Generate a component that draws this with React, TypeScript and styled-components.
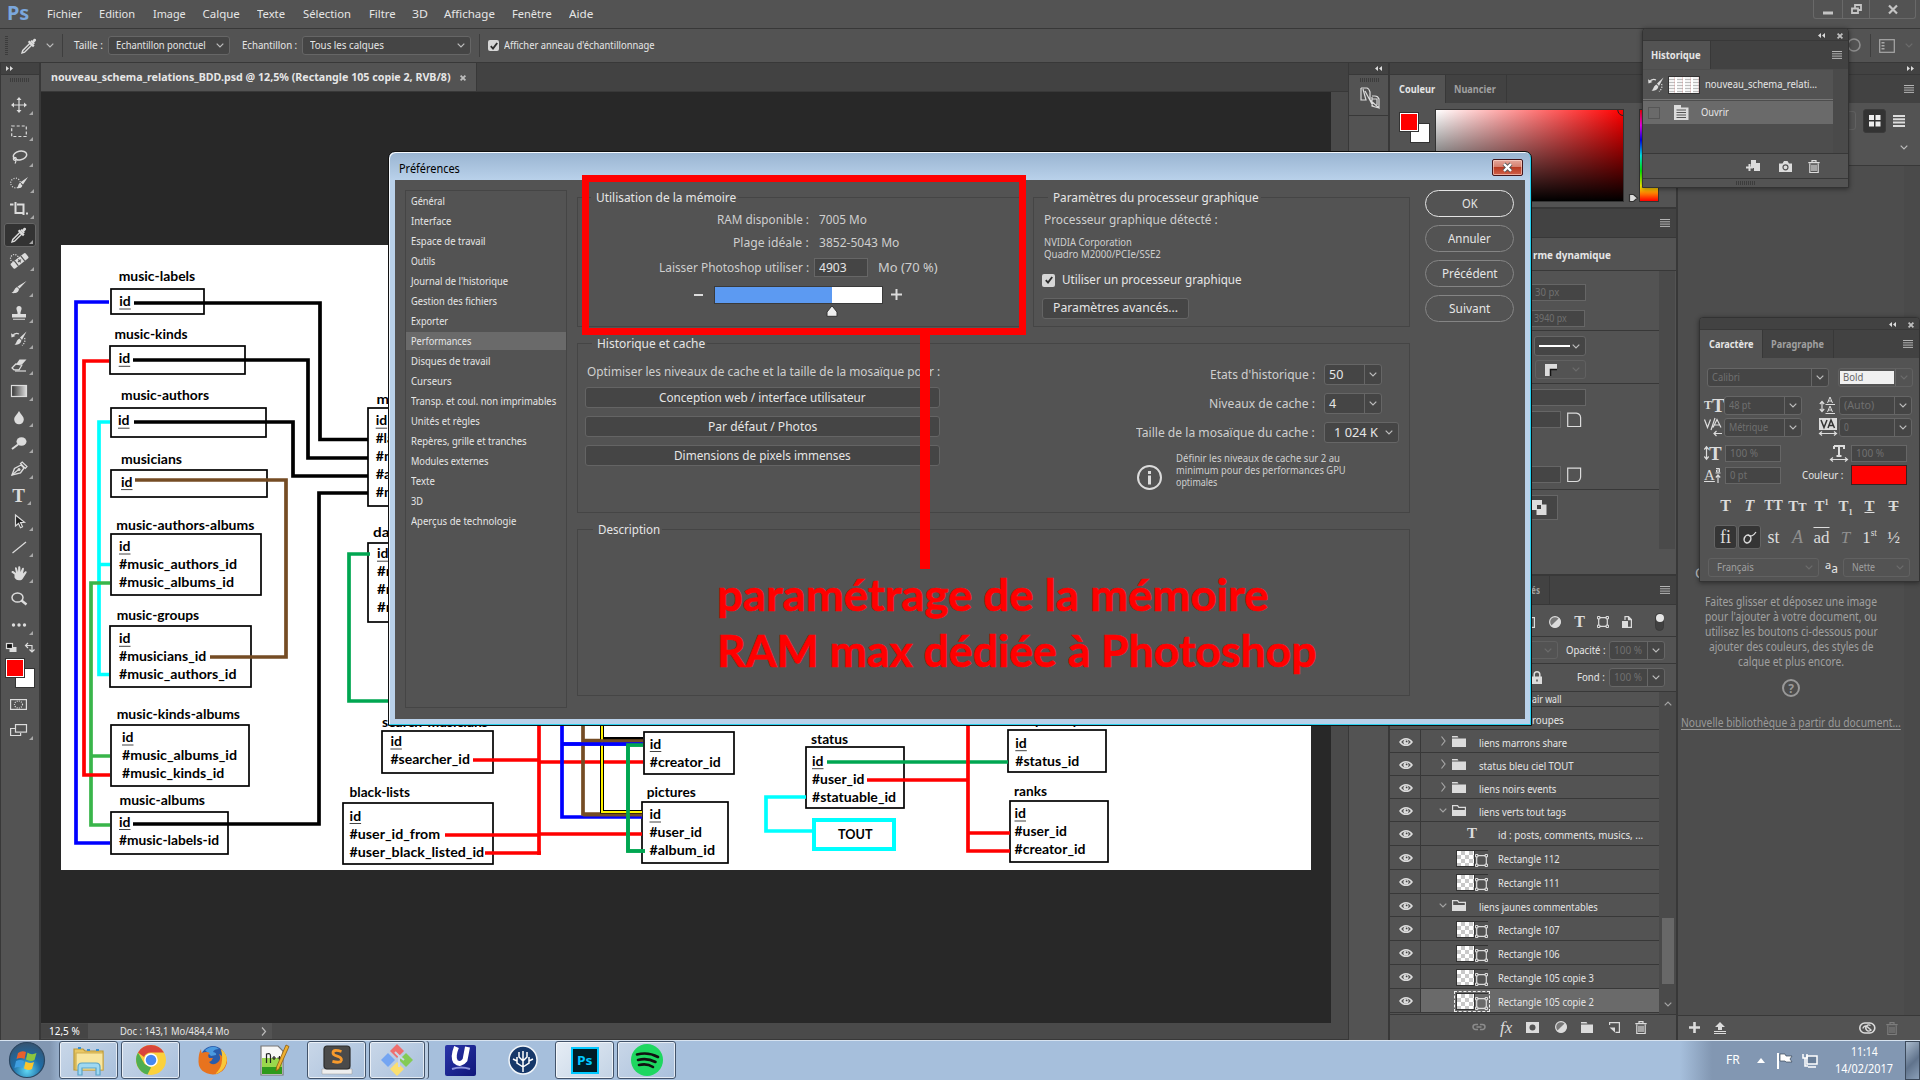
import React, { useLayoutEffect, useRef, useState } from "react";
import styled, { createGlobalStyle, css } from "styled-components";

const UI = `"Noto Sans", "Open Sans", "DejaVu Sans", sans-serif`;
const SCHEMA = `Lato, "Open Sans", sans-serif`;

const c = {
  panel: "#535353",
  strip: "#424242",
  line: "#383838",
  field: "#454545",
  edge: "#666666",
  text: "#e6e6e6",
  dim: "#a0a0a0",
  off: "#707070",
  icon: "#dcdcdc",
  canvas: "#282828",
};

const GlobalStyle = createGlobalStyle`
  html, body { margin: 0; padding: 0; overflow: hidden; background: ${c.panel}; }
  *, *::before, *::after { box-sizing: border-box; }
`;

/* ---------- text ---------- */

const TextBox = styled.span<{ $size: number; $color: string; $bold?: boolean; $font: string }>`
  display: inline-block;
  flex: none;
  font: ${(p) => (p.$bold ? 700 : 400)} ${(p) => p.$size}px/1.25 ${(p) => p.$font};
  color: ${(p) => p.$color};
  white-space: pre;
`;
const TextRun = styled.span<{ $underline?: boolean }>`
  display: inline-block;
  transform-origin: 0 50%;
  text-decoration: ${(p) => (p.$underline ? "underline" : "none")};
  text-underline-offset: 2px;
`;

type TProps = {
  children: string;
  w?: number;
  size?: number;
  color?: string;
  bold?: boolean;
  font?: string;
  underline?: boolean;
};

/* A single line of text condensed or widened to a fixed measure. */
function T({ children, w, size = 10, color = c.text, bold, font = UI, underline }: TProps) {
  const ref = useRef<HTMLSpanElement>(null);
  const [k, setK] = useState(1);
  useLayoutEffect(() => {
    if (w && ref.current) setK(w / ref.current.offsetWidth);
  }, [w, children]);
  return (
    <TextBox $size={size} $color={color} $bold={bold} $font={font} style={w ? { width: w } : undefined}>
      <TextRun ref={ref} $underline={underline} style={w ? { transform: `scaleX(${k})` } : undefined}>
        {children}
      </TextRun>
    </TextBox>
  );
}

/* ---------- icons ---------- */

const Glyph = styled.svg`
  display: block;
  flex: none;
  overflow: visible;
`;
const G = ({ w = 16, h = w, color = c.icon, children }: { w?: number; h?: number; color?: string; children: React.ReactNode }) => (
  <Glyph width={w} height={h} viewBox={`0 0 ${w} ${h}`} fill="none" stroke={color} strokeWidth={1.2} color={color}>
    {children}
  </Glyph>
);
const solid = { fill: "currentColor", stroke: "none" };

const Chevron = ({ color = "#bdbdbd" }: { color?: string }) => (
  <G w={8} h={5} color={color}><path d="M.7.7 4 4 7.3.7" /></G>
);
const ChevronUp = () => <G w={8} h={5} color="#a5a5a5"><path d="M.7 4.3 4 1l3.3 3.3" /></G>;
const Burger = () => (
  <G w={10} h={8} color="#b4b4b4"><path d="M0 .5h10M0 2.8h10M0 5.1h10M0 7.4h10" strokeWidth={1} /></G>
);
const Collapse = () => <G w={7} h={5}><path d="M3 0v5L0 2.5zM7 0v5L4 2.5z" {...solid} /></G>;
const Expand = () => <G w={7} h={5}><path d="M0 0v5l3-2.5zM4 0v5l3-2.5z" {...solid} /></G>;
const Cross = ({ color = "#bdbdbd" }: { color?: string }) => (
  <G w={6} h={6} color={color}><path d="M.6.6l4.8 4.8M5.4.6L.6 5.4" strokeWidth={1.8} /></G>
);
const Check = () => (
  <G w={8} h={8} color="#2f2f2f"><path d="M.8 4.2 3 6.6 7.2 1" strokeWidth={1.9} /></G>
);
const Dropper = () => (
  <G w={16}>
    <path d="M1 15l.8-2.600L9 5.200 10.800 7l-7.200 7.200z" strokeWidth={1.400} />
    <path d="M9.3 3.4 12.6 6.7l1.200-1.200-.7-.8 1.600-1.700c1.200-1.300-.5-3.200-1.900-1.900L11.200 2.800l-.8-.7z" {...solid} />
    <path d="M7.600 3.200l5.200 5.200" strokeWidth={2.200} />
  </G>
);
const HistoryBrush = () => (
  <G w={16}>
    <path d="M15.5.5 9 6.5 11 9z" {...solid} />
    <path d="M8.4 7.4l2 2.2c-.6 3.6-3.6 4.4-7 4.2C6 12 5 9 8.4 7.4z" {...solid} />
    <path d="M1 5.500C3 2.600 6 2 8 3" />
    <path d="M0 2.200l.6 4.400L4.400 5z" {...solid} />
    <path d="M13.600 7c1 3.600-.6 6-2.600 7.400" strokeDasharray="1.200 1.400" />
  </G>
);
const Trash = ({ color = c.icon }: { color?: string }) => (
  <G w={12} h={13} color={color}><path d="M1.8 3.5v9h8.4v-9M.3 2.600h11.400M4 2.300V.6h4v1.700M4 4.800V11M6 4.800V11M8 4.800V11" /></G>
);
const HalfDisc = () => (
  <G w={12}><circle cx={6} cy={6} r={5.4} fill="#777" /><path d="M1.9 10.1A5.8 5.8 0 0 0 10.1 1.9z" {...solid} /></G>
);
const Folder = ({ w = 14 }: { w?: number }) => (
  <G w={w} h={11}><path d={`M0 2.6h${w}V11H0zM0 0h5.5L6.5 1.5H0z`} {...solid} /></G>
);
const OpenFolder = () => (
  <G w={14} h={11}><path d="M.6 5V.6h5l1.2 1.8h6.600V5" /><path d="M0 5h14v6H0z" {...solid} /></G>
);
const ShapeIcon = ({ w = 12 }: { w?: number }) => (
  <G w={w}>
    <path d={`M2.6 1.7h${w - 5.2}M2.6 ${w - 1.7}h${w - 5.2}M1.7 2.6v${w - 5.2}M${w - 1.7} 2.6v${w - 5.2}`} />
    <path d={`M.5.5h2.4v2.4H.5zM${w - 2.9}.5h2.4v2.4h-2.4zM.5 ${w - 2.9}h2.4v2.4H.5zM${w - 2.9} ${w - 2.9}h2.4v2.4h-2.4z`} strokeWidth={1} />
  </G>
);
const Eye = () => (
  <G w={14} h={10}>
    <path d="M1 5C4 .6 10 .6 13 5 10 9.400 4 9.400 1 5z" strokeWidth={1.5} />
    <circle cx={7} cy={5} r={2.6} {...solid} /><circle cx={7.6} cy={4.400} r={0.9} fill="#444" stroke="none" />
  </G>
);
const Serif = styled.span<{ $size: number; $i?: boolean; $b?: boolean; $u?: boolean; $s?: boolean; $dim?: boolean; $fn?: string }>`
  font: ${(p) => (p.$i ? "italic " : "")}${(p) => (p.$b ? 700 : 400)} ${(p) => p.$size}px/1 "Liberation Serif", "DejaVu Serif", serif;
  color: ${(p) => (p.$dim ? "#8f8f8f" : c.icon)};
  text-decoration: ${(p) => (p.$u ? "underline" : p.$s ? "line-through" : p.$fn || "none")};
  white-space: nowrap;
  sub, sup { font-size: 55%; line-height: 0; }
`;

/* ---------- frame ---------- */

const Screen = styled.div`
  position: relative;
  width: 1920px;
  height: 1080px;
  overflow: hidden;
  display: flex;
  flex-direction: column;
  background: ${c.panel};
`;
const MenuBar = styled.header`
  height: 29px;
  flex: none;
  display: flex;
  align-items: flex-start;
  border-bottom: 1px solid ${c.line};
`;
const PsLogo = styled.div`
  width: 40px;
  padding: 2px 0 0 7px;
`;
const MenuItem = styled.div<{ $gap: number }>`
  margin-left: ${(p) => p.$gap}px;
  padding-top: 4px;
  height: 28px;
`;
const WindowButtons = styled.div`
  margin: 0 4px 0 auto;
  width: 103px;
  height: 19px;
  display: grid;
  grid-template-columns: 28px 27px 1fr;
  border: 1px solid #696969;
  border-top: 0;
  border-radius: 0 0 3px 3px;
`;
const WinButton = styled.div`
  display: flex;
  align-items: center;
  justify-content: center;
  & + & { border-left: 1px solid #696969; }
`;
const OptionsBar = styled.div`
  height: 34px;
  flex: none;
  display: flex;
  align-items: center;
  padding-left: 5px;
  border-bottom: 1px solid ${c.line};
`;
const GripV = styled.div`
  width: 3px;
  height: 20px;
  background: repeating-linear-gradient(#3c3c3c 0 1px, transparent 1px 2px);
`;
const GripH = styled.div<{ $w?: number }>`
  width: ${(p) => p.$w || 20}px;
  height: 4px;
  background: repeating-linear-gradient(90deg, #3c3c3c 0 1px, transparent 1px 2px);
`;
const Rule = styled.div`
  width: 1px;
  height: 23px;
  background: #3e3e3e;
`;
const Gap = styled.div<{ $w?: number; $h?: number }>`
  flex: none;
  width: ${(p) => p.$w || 0}px;
  height: ${(p) => p.$h || 0}px;
`;
const Push = styled.div`
  flex: 1;
`;

const Field = styled.div<{ $w: number; $h?: number; $round?: boolean; $ghost?: boolean }>`
  flex: none;
  width: ${(p) => p.$w}px;
  height: ${(p) => p.$h || 18}px;
  display: flex;
  align-items: center;
  justify-content: space-between;
  padding: 0 5px 0 4px;
  background: ${(p) => (p.$ghost ? "transparent" : c.field)};
  border: 1px solid ${(p) => (p.$ghost ? "#616161" : c.edge)};
  border-radius: ${(p) => (p.$round ? 3 : 0)}px;
`;
const Split = styled.div`
  align-self: stretch;
  width: 17px;
  margin-right: -5px;
  display: flex;
  align-items: center;
  justify-content: center;
  border-left: 1px solid ${c.edge};
`;
const CheckBox = styled.div<{ $s: number }>`
  width: ${(p) => p.$s}px;
  height: ${(p) => p.$s}px;
  flex: none;
  display: flex;
  align-items: center;
  justify-content: center;
  background: #d6d6d6;
  border-radius: 2px;
`;

const Work = styled.div`
  flex: none;
  height: 977px;
  display: flex;
  background: ${c.line};
`;

/* ---------- toolbox ---------- */

const Toolbox = styled.nav`
  width: 38px;
  margin: 0 2px 0 1px;
  flex: none;
  display: flex;
  flex-direction: column;
  align-items: center;
  background: ${c.panel};
`;
const StripHead = styled.div<{ $end?: boolean }>`
  align-self: stretch;
  height: 12px;
  flex: none;
  display: flex;
  align-items: center;
  justify-content: ${(p) => (p.$end ? "flex-end" : "flex-start")};
  padding: 0 6px 0 5px;
  background: ${c.strip};
  border-bottom: 1px solid ${c.line};
`;
const Tool = styled.div<{ $on?: boolean; $flag?: boolean }>`
  width: 32px;
  height: 26px;
  flex: none;
  display: flex;
  align-items: center;
  justify-content: center;
  padding-right: 3px;
  ${(p) =>
    p.$on &&
    css`
      background: #333;
      background-clip: padding-box;
      border-top: 3px solid transparent;
      border-bottom: 3px solid transparent;
      margin: -3px 0;
      height: 32px;
      border: 0;
      height: 24px;
      margin: 1px 0;
      border-radius: 3px;
      box-shadow: 0 0 0 1px #666 inset;
    `}
  &::after {
    content: "";
    align-self: flex-end;
    margin: 0 -6px 3px 2px;
    border: 2px solid transparent;
    border-right-color: ${(p) => (p.$flag === false ? "transparent" : "#a8a8a8")};
    border-bottom-color: ${(p) => (p.$flag === false ? "transparent" : "#a8a8a8")};
  }
`;
const Swatches = styled.div<{ $w: number; $h: number }>`
  display: grid;
  grid-template: ${(p) => p.$h}px / ${(p) => p.$w}px;
  flex: none;
`;
const Swatch = styled.div<{ $color: string; $back?: boolean }>`
  grid-area: 1 / 1;
  width: 20px;
  height: 20px;
  background: ${(p) => p.$color};
  border: 1px solid #333;
  ${(p) =>
    p.$back
      ? css`
          place-self: end;
        `
      : css`
          place-self: start;
          z-index: 1;
          box-shadow: inset 0 0 0 1px #fff;
        `}
`;

const toolIcons: { icon: React.ReactNode; on?: boolean; flag?: boolean }[] = [
  { icon: <G><path d="M8 1v14M1 8h14" /><path d="M8 0l2.500 3h-5zM8 16l2.500-3h-5zM0 8l3-2.500v5zM16 8l-3-2.500v5z" {...solid} /></G> },
  { icon: <G><path d="M.7 3h14.600v10.500H.7z" strokeDasharray="3 2" /></G> },
  { icon: <G><ellipse cx={9} cy={6.500} rx={6.800} ry={4.300} transform="rotate(-12 9 6.500)" strokeWidth={1.500} /><circle cx={3.800} cy={9.800} r={1.500} /><path d="M4.500 11c1 1.500 0 2.500-.5 3.500" /></G> },
  { icon: <G w={18} h={16}><circle cx={5.500} cy={8} r={4.800} strokeDasharray="1 1.500" /><path d="M18 2l-5 7.500-2.500-2.200zM9.800 8l2.600 2.600c-.6 2.600-3 3-5.600 2.600C8.400 12 7.800 9.500 9.800 8z" {...solid} /></G> },
  { icon: <G w={18} h={16}><path d="M5.500 1v11H14M0 3.500h3.500M7 3.500h6.500V14M16 12.500h2" strokeWidth={2} /></G> },
  { icon: <Dropper />, on: true },
  { icon: <G w={18} h={16}><circle cx={4.500} cy={5.500} r={4} strokeDasharray="1.200 1.200" /><g transform="rotate(-38 9 8)"><rect x={0} y={5} width={19} height={6.500} rx={1.500} {...solid} /><path d="M5.500 5v6.500M13.500 5v6.500M7.500 8.200h4M9.500 6.400v3.600" stroke="#535353" /></g></G> },
  { icon: <G><path d="M15.500 2 8.500 9.500 6.500 7.500zM6 8l2 2c-.4 4-4 4.500-7.500 4C3.500 12.500 3 9.500 6 8z" {...solid} /></G> },
  { icon: <G><path d="M5.500 4.200a2.600 2.600 0 1 1 5 0L9.500 7.500V9H15v3.500H1V9h5.500V7.500zM2 13.800h12v1H2z" {...solid} /></G> },
  { icon: <HistoryBrush /> },
  { icon: <G><path d="M7.500 3h7l-4.500 5h-6z" {...solid} transform="translate(1 -.5)" /><path d="M1 11 4.800 7l6 1.200L8 12.800H3z" /><path d="M4 14h11" /></G> },
  { icon: <G w={16} h={12}><defs><linearGradient id="tg"><stop stopColor="#333" /><stop offset="1" stopColor="#ddd" /></linearGradient></defs><rect x={0.500} y={0.500} width={15} height={11} fill="url(#tg)" /></G> },
  { icon: <G><path d="M8 2c2 3.600 4.800 5.400 4.800 8.500A4.800 4.800 0 0 1 3.200 10.500C3.200 7.400 6 5.600 8 2z" {...solid} /></G> },
  { icon: <G><ellipse cx={10.500} cy={6.500} rx={5} ry={4.300} {...solid} /><path d="M7 9.500 1 14" strokeWidth={2} /></G> },
  { icon: <G><path d="M1 14l2.500-6.500L10 4 13 7 9.500 12z" strokeWidth={1.400} /><path d="M1 14l6-5M9.500 2.500l4.800 4.800L16 5.500 11.200 1z" /><circle cx={8} cy={8.500} r={1.500} {...solid} /></G> },
  { icon: <Serif $size={19} $b>T</Serif> },
  { icon: <G><path d="M4.500 2v11l3-2.500 2 4.300 2-1-2-4.200 4-.3z" fill="#222" /></G> },
  { icon: <G><path d="M1.500 14 15 3" /></G> },
  { icon: <G><path d="M3.500 9.500.6 7.500C0 6.200 1.700 5.400 2.600 6.200L5 8 4 3.500C3.800 2.100 5.500 2 5.900 3.200L7 7 7.200 2.400C7.300 1 9.200 1 9.300 2.400L9.500 7 11 3.400c.5-1.200 2.200-.8 1.900.6L12 8.500l1.800-1.700c.9-1 2.300-.3 1.700.9L12.500 12.500c-1 2-2 2.800-4.500 2.800-2.400 0-3.700-1.300-4.500-2.800z" {...solid} /></G> },
  { icon: <G><ellipse cx={6.500} cy={6.500} rx={5.500} ry={4.600} strokeWidth={1.500} /><path d="M10.500 9.500 15.500 13.500" strokeWidth={2.400} /></G>, flag: false },
  { icon: <G><circle cx={2.500} cy={8} r={1.700} {...solid} /><circle cx={8} cy={8} r={1.700} {...solid} /><circle cx={13.500} cy={8} r={1.700} {...solid} /></G> },
];

/* ---------- document ---------- */

const DocColumn = styled.main`
  width: 1307px;
  flex: none;
  display: flex;
  flex-direction: column;
`;
const DocTabs = styled.div`
  height: 29px;
  display: flex;
  background: ${c.strip};
  border-bottom: 1px solid ${c.line};
`;
const DocTab = styled.div`
  width: 436px;
  display: flex;
  align-items: center;
  gap: 9px;
  padding: 1px 0 0 10px;
  background: ${c.panel};
  border-right: 1px solid ${c.line};
`;
const CanvasRow = styled.div`
  height: 931px;
  display: flex;
  background: #4a4a4a;
`;
const StatusBar = styled.footer`
  height: 16px;
  display: flex;
  background: #4a4a4a;
`;
const Zoom = styled.div`
  width: 47px;
  height: 14px;
  margin-top: 1px;
  padding-left: 8px;
  display: flex;
  align-items: center;
  background: #454545;
`;
const DocInfo = styled.div`
  width: 184px;
  display: flex;
  align-items: center;
  padding: 0 5px 0 32px;
  justify-content: space-between;
  background: ${c.panel};
`;

type Node = { t?: string; tx?: number; tw?: number; ty?: number; b: [number, number, number, number]; x: number; y: number; r: [string, number][] };
const nodes: Node[] = [
  { t: "music-labels", tx: 118.7, tw: 76.500, ty: 280.500, b: [111, 289, 93, 25], x: 119.3, y: 306, r: [["id", 11.500]] },
  { t: "music-kinds", tx: 114.5, tw: 73, ty: 339.200, b: [110, 346, 135, 28], x: 118.7, y: 363.300, r: [["id", 11.500]] },
  { t: "music-authors", tx: 121, tw: 88, ty: 400, b: [111, 408, 155, 29], x: 118, y: 425.200, r: [["id", 11.500]] },
  { t: "musicians", tx: 121, tw: 61, ty: 464.200, b: [111, 470, 156, 27], x: 121, y: 486.600, r: [["id", 11.500]] },
  { t: "music-authors-albums", tx: 116.3, tw: 138, ty: 530, b: [111, 534, 150, 61], x: 119, y: 551, r: [["id", 11.500], ["#music_authors_id", 118], ["#music_albums_id", 115]] },
  { t: "music-groups", tx: 116.7, tw: 82.500, ty: 620, b: [110, 626, 141, 61], x: 119, y: 643.300, r: [["id", 11.500], ["#musicians_id", 87.300], ["#music_authors_id", 117.500]] },
  { t: "music-kinds-albums", tx: 116.7, tw: 123.300, ty: 718.500, b: [111, 725, 138, 61], x: 122, y: 742, r: [["id", 11.500], ["#music_albums_id", 115], ["#music_kinds_id", 102.300]] },
  { t: "music-albums", tx: 119.5, tw: 85.500, ty: 805, b: [111, 812, 117, 42], x: 119, y: 826.500, r: [["id", 11.500], ["#music-labels-id", 100]] },
  { t: "mu", tx: 376.5, tw: 21, ty: 404, b: [368, 408, 120, 98], x: 375.700, y: 425.200, r: [["id", 11.500], ["#lab", 26], ["#mu", 28], ["#au", 24], ["#mu", 28]] },
  { t: "dat", tx: 373, tw: 22, ty: 536.500, b: [368, 543, 120, 79], x: 377, y: 558.200, r: [["id", 11.500], ["#ra", 22], ["#ra", 22], ["#ra", 22]] },
  { t: "search-musicians", tx: 382, tw: 106, ty: 727, b: [382, 731, 111, 42], x: 390.400, y: 746, r: [["id", 11.500], ["#searcher_id", 79.500]] },
  { t: "black-lists", tx: 349.600, tw: 60.500, ty: 796.500, b: [343, 803, 150, 61], x: 349.600, y: 820.500, r: [["id", 11.500], ["#user_id_from", 90.500], ["#user_black_listed_id", 134.500]] },
  { b: [644, 732, 90, 42], x: 649.800, y: 748.500, r: [["id", 11.500], ["#creator_id", 71]] },
  { t: "pictures", tx: 646.800, tw: 49, ty: 796.500, b: [642, 802, 86, 61], x: 649.500, y: 819, r: [["id", 11.500], ["#user_id", 52.500], ["#album_id", 65.500]] },
  { t: "status", tx: 811, tw: 37, ty: 743.500, b: [806, 747, 98, 61], x: 812, y: 765.700, r: [["id", 11.500], ["#user_id", 52.500], ["#statuable_id", 84]] },
  { t: "privacy", tx: 1035, tw: 44, ty: 724.500, b: [1008, 730, 98, 42], x: 1015.300, y: 747.700, r: [["id", 11.500], ["#status_id", 64]] },
  { t: "ranks", tx: 1014, tw: 33, ty: 795.500, b: [1010, 801, 98, 61], x: 1014.500, y: 818, r: [["id", 11.500], ["#user_id", 52.500], ["#creator_id", 71]] },
];
const wires: [string, string][] = [
  ["#0000ff", "M109 302H76V843H110"],
  ["#00ffff", "M110 422H99V674.500H109M99 564.500H110"],
  ["#39b54a", "M110 583H91V825H110M91 756H110"],
  ["#ff0000", "M109 361H84V775H110"],
  ["#000", "M134 303H320V439.500H368"],
  ["#000", "M133 360H308V458H368"],
  ["#000", "M134 422H293V476H368"],
  ["#000", "M133 824H319V493H368"],
  ["#754c24", "M135 480H286V657H210"],
  ["#00a651", "M370 554H349V701H400"],
  ["#ff0000", "M539 720V855M473 760H539M539 762H643M445 835H539M539 834H642M485 853H541"],
  ["#0000ff", "M562 720V817H642M562 744H643"],
  ["#754c24", "M583 720V814H642M583 740.500H643"],
  ["#00a651", "M643 745H628V851H645"],
  ["#00a651", "M827 762H1008"],
  ["#ff0000", "M968 720V851H1010M867 780H968M968 833H1010"],
  ["#00ffff", "M806 797H766V831H813"],
];
const Schema = () => (
  <Glyph width={1290} height={931} viewBox="41 92 1290 931" fontFamily={SCHEMA} fontWeight={700} fontSize={14}>
    <rect x={41} y={92} width={1290} height={931} fill={c.canvas} />
    <rect x={61} y={245} width={1250} height={625} fill="#fff" />
    {nodes.map((n, i) => (
      <g key={i}>
        <rect x={n.b[0]} y={n.b[1]} width={n.b[2]} height={n.b[3]} fill="#fff" stroke="#000" strokeWidth={1.700} />
        {n.t && <text x={n.tx} y={n.ty} textLength={n.tw} lengthAdjust="spacingAndGlyphs">{n.t}</text>}
        {n.r.map(([s, w], k) => (
          <text key={k} x={n.x} y={n.y + k * 18} textLength={w} lengthAdjust="spacingAndGlyphs">{s}</text>
        ))}
        <path d={`M${n.x} ${n.y + 3}h11.500`} stroke="#444" strokeWidth={1} />
      </g>
    ))}
    {wires.map(([col, d], i) => (
      <path key={i} d={d} stroke={col} strokeWidth={3.700} fill="none" />
    ))}
    <path d="M602 720V812H642M602 720V739H643" stroke="#000" strokeWidth={4} fill="none" />
    <path d="M602 720V812H642" stroke="#fff200" strokeWidth={2} fill="none" />
    <path d="M583 741H643" stroke="#754c24" strokeWidth={3.500} />
    <path d="M583 815H642" stroke="#754c24" strokeWidth={3} />
    <path d="M562 744H643" stroke="#0000ff" strokeWidth={3.500} />
    <path d="M643 745H628V851H645" stroke="#00a651" strokeWidth={3.700} fill="none" />
    <rect x={814} y={820} width={80} height={29} fill="#fff" stroke="#00ffff" strokeWidth={4} />
    <text x={838} y={839.200} textLength={34.500} lengthAdjust="spacingAndGlyphs">TOUT</text>
  </Glyph>
);

/* ---------- right docks ---------- */

const IconDock = styled.aside`
  width: 39px;
  margin-left: 1px;
  flex: none;
  background: ${c.panel};
`;
const DockCell = styled.div`
  height: 41px;
  display: flex;
  flex-direction: column;
  align-items: center;
  gap: 5px;
  padding: 3px 0 0 2px;
  border-bottom: 1px solid ${c.line};
`;
const Panels = styled.aside`
  width: 286px;
  margin-left: 2px;
  flex: none;
  display: flex;
  flex-direction: column;
  background: ${c.panel};
`;
const TabStrip = styled.div`
  height: 28px;
  flex: none;
  display: flex;
  align-items: stretch;
  background: ${c.strip};
`;
const Tab = styled.div<{ $w: number; $on?: boolean; $pad?: number }>`
  width: ${(p) => p.$w}px;
  display: flex;
  align-items: center;
  padding-left: ${(p) => p.$pad ?? 9}px;
  background: ${(p) => (p.$on ? c.panel : "transparent")};
  border-right: 1px solid ${c.line};
`;
const TabMenu = styled.div`
  margin-left: auto;
  padding-right: 6px;
  display: flex;
  align-items: center;
`;
const ColorBody = styled.div`
  height: 104px;
  flex: none;
  display: flex;
  align-items: flex-start;
  padding: 6px 0 0 9px;
`;
const SwatchSlot = styled.div`
  padding-top: 3px;
`;
const ColorField = styled.div`
  width: 189px;
  height: 93px;
  margin-left: 5px;
  border: 1px solid #333;
  background: linear-gradient(transparent, #000), linear-gradient(90deg, #fff, #f00);
  display: flex;
  justify-content: flex-end;
  overflow: hidden;
`;
const HueRow = styled.div`
  display: flex;
  align-items: flex-end;
  margin-left: 5px;
`;
const Hue = styled.div`
  width: 20px;
  height: 93px;
  margin-left: 1px;
  border: 1px solid #333;
  background: linear-gradient(#f00, #f0f 17%, #00f 33%, #0ff 50%, #0f0 67%, #ff0 83%, #f00);
`;
const Divider = styled.div<{ $h?: number }>`
  flex: none;
  height: ${(p) => p.$h || 1}px;
  background: ${c.line};
`;
const PropsHead = styled.div`
  height: 34px;
  flex: none;
  display: flex;
  align-items: center;
  justify-content: flex-end;
  padding: 2px 65px 0 0;
  border-top: 1px solid ${c.line};
  border-bottom: 1px solid ${c.line};
`;
const PropsBody = styled.div`
  height: 303px;
  flex: none;
  display: flex;
`;
const PropsForm = styled.div`
  width: 269px;
  display: flex;
  flex-direction: column;
`;
const PropRow = styled.div<{ $h: number; $pr?: number; $line?: boolean }>`
  height: ${(p) => p.$h}px;
  flex: none;
  display: flex;
  align-items: flex-start;
  justify-content: flex-end;
  gap: 6px;
  padding-right: ${(p) => p.$pr ?? 73}px;
  border-bottom: ${(p) => (p.$line ? `1px solid ${c.line}` : "0")};
`;
const Gutter = styled.div<{ $h?: number }>`
  width: 16px;
  height: ${(p) => (p.$h ? `${p.$h}px` : "auto")};
  background: #4a4a4a;
`;
const FilterRow = styled.div`
  height: 32px;
  flex: none;
  display: flex;
  align-items: center;
  padding: 3px 12px 0 0;
  border-bottom: 1px solid ${c.line};
`;
const LayerOpt = styled.div<{ $h: number }>`
  height: ${(p) => p.$h}px;
  flex: none;
  display: flex;
  align-items: center;
  justify-content: flex-end;
  gap: 4px;
  padding-right: 11px;
  border-bottom: 1px solid ${c.line};
`;
const LayerArea = styled.div`
  display: flex;
  height: 322px;
  flex: none;
`;
const LayerList = styled.div`
  width: 269px;
`;
const LayerRow = styled.div<{ $h: number; $on?: boolean }>`
  height: ${(p) => p.$h}px;
  display: flex;
  align-items: center;
  border-bottom: 1px solid ${c.line};
  background: ${(p) => (p.$on ? `linear-gradient(90deg, ${c.panel} 31px, #6a6a6a 31px)` : "none")};
`;
const LayerName = styled.div<{ $drop?: number }>`
  display: flex;
  padding-top: ${(p) => p.$drop ?? 4}px;
`;
const EyeCell = styled.div`
  width: 31px;
  align-self: stretch;
  flex: none;
  display: flex;
  align-items: center;
  justify-content: center;
  padding: 1px 0 0 1px;
  border-right: 1px solid ${c.line};
`;
const LayerIcon = styled.div`
  padding-top: 1px;
`;
const Thumb = styled.div<{ $on?: boolean }>`
  width: 32px;
  height: 17px;
  flex: none;
  display: flex;
  align-items: flex-end;
  border-top: 1px solid #333;
  outline: ${(p) => (p.$on ? "1px dashed #eee" : "none")};
  outline-offset: 1px;
`;
const Checker = styled.div`
  width: 19px;
  height: 16px;
  border: 1px solid #333;
  border-top: 0;
  background: repeating-conic-gradient(#c8c8c8 0 25%, #fff 0 50%) 0 0 / 8px 8px;
`;
const Scroller = styled.div`
  width: 17px;
  display: flex;
  flex-direction: column;
  align-items: center;
  background: #4a4a4a;
  padding: 9px 0 7px;
`;
const ScrollThumb = styled.div`
  width: 12px;
  height: 66px;
  margin-top: auto;
  margin-bottom: 18px;
  background: #686868;
`;
const BottomBar = styled.div`
  height: 25px;
  flex: none;
  display: flex;
  align-items: center;
  border-top: 1px solid ${c.line};
`;
const Toggle = styled.div`
  width: 9px;
  height: 18px;
  border-radius: 5px;
  border: 1px solid #3a3a3a;
  background: #404040;
  &::before {
    content: "";
    display: block;
    width: 8px;
    height: 8px;
    border-radius: 50%;
    background: #e6e6e6;
  }
`;

const layers: { kind: "group" | "open" | "text" | "shape"; name: string; w: number; h: number; on?: boolean }[] = [
  { kind: "group", name: "liens marrons share", w: 88, h: 23 },
  { kind: "group", name: "status bleu ciel TOUT", w: 95, h: 23 },
  { kind: "group", name: "liens noirs events", w: 77, h: 23 },
  { kind: "open", name: "liens verts tout tags", w: 86.500, h: 23 },
  { kind: "text", name: "id : posts, comments, musics, ...", w: 145, h: 24 },
  { kind: "shape", name: "Rectangle 112", w: 61.500, h: 24 },
  { kind: "shape", name: "Rectangle 111", w: 61.500, h: 24 },
  { kind: "open", name: "liens jaunes commentables", w: 119, h: 23 },
  { kind: "shape", name: "Rectangle 107", w: 61.500, h: 24 },
  { kind: "shape", name: "Rectangle 106", w: 61.500, h: 24 },
  { kind: "shape", name: "Rectangle 105 copie 3", w: 95.500, h: 24 },
  { kind: "shape", name: "Rectangle 105 copie 2", w: 95.500, h: 24, on: true },
];

/* ---------- library ---------- */

const Library = styled.aside`
  width: 242px;
  margin-left: 2px;
  flex: none;
  display: flex;
  flex-direction: column;
  background: ${c.panel};
`;
const LibTools = styled.div`
  height: 63px;
  flex: none;
  display: grid;
  grid-template-rows: 35px 19px;
  padding: 0 8px 0 0;
  border-bottom: 1px solid ${c.line};
`;
const LibLine = styled.div`
  display: flex;
  align-items: center;
  justify-content: flex-end;
`;
const GridButton = styled.div`
  width: 23px;
  height: 24px;
  margin: 0 7px 0 7px;
  display: flex;
  align-items: center;
  justify-content: center;
  background: #333;
  border: 1px solid #3a3a3a;
  border-radius: 3px;
`;
const LibBody = styled.div`
  flex: 1;
  display: flex;
  flex-direction: column;
  align-items: center;
  padding: 398px 16px 0 0;
  background: linear-gradient(90deg, #4d4d4d 226px, #4a4a4a 226px);
`;
const LibTitle = styled.div`
  align-self: flex-start;
  height: 30px;
  padding-left: 17px;
`;
const Help = styled.div`
  width: 18px;
  height: 18px;
  margin: 10px 0 18px;
  display: flex;
  align-items: center;
  justify-content: center;
  border: 2px solid #999;
  border-radius: 50%;
`;

/* ---------- floating panels ---------- */

const Floating = styled.section<{ $x: number; $y: number; $w: number; $h: number }>`
  position: absolute;
  left: ${(p) => p.$x}px;
  top: ${(p) => p.$y}px;
  width: ${(p) => p.$w}px;
  height: ${(p) => p.$h}px;
  display: flex;
  flex-direction: column;
  background: ${c.panel};
  border: 1px solid #333;
  border-radius: 4px 4px 0 0;
  box-shadow: 0 1px 5px rgba(0, 0, 0, 0.45);
  overflow: hidden;
`;
const FloatHead = styled.div`
  height: 12px;
  flex: none;
  display: flex;
  align-items: center;
  justify-content: flex-end;
  gap: 12px;
  padding: 2px 5px 0;
  background: ${c.strip};
  border-bottom: 1px solid ${c.line};
`;
const HistoryList = styled.div`
  height: 85px;
  flex: none;
  padding-top: 1px;
  background: linear-gradient(90deg, #4d4d4d 190px, #4a4a4a 190px);
  border-bottom: 1px solid ${c.line};
`;
const HistoryRow = styled.div<{ $h: number; $on?: boolean }>`
  width: 190px;
  height: ${(p) => p.$h}px;
  display: flex;
  align-items: center;
  padding-left: 5px;
  background: ${(p) => (p.$on ? "#6a6a6a" : c.panel)};
  border-bottom: ${(p) => (p.$on ? "0" : "1px solid #777")};
`;
const SnapThumb = styled.div`
  width: 32px;
  height: 18px;
  border: 1px solid #333;
  background:
    repeating-linear-gradient(90deg, transparent 0 5px, rgba(210, 130, 130, 0.3) 5px 6px, #fff 6px 8px),
    repeating-linear-gradient(#f4f4f4 0 2px, #bdbdbd 2px 3px);
`;
const MiniBox = styled.div`
  width: 12px;
  height: 12px;
  border: 1px solid #565656;
`;
const FloatTools = styled.div`
  height: 25px;
  flex: none;
  display: flex;
  align-items: center;
  justify-content: flex-end;
  padding-right: 28px;
  border-bottom: 1px solid ${c.line};
`;
const FloatGrip = styled.div`
  flex: 1;
  display: flex;
  align-items: center;
  justify-content: center;
`;
const CharRow = styled.div<{ $h: number; $pl?: number }>`
  height: ${(p) => p.$h}px;
  flex: none;
  display: flex;
  align-items: center;
  padding-left: ${(p) => p.$pl ?? 4}px;
`;
const IconSlot = styled.div<{ $w: number; $ml?: number }>`
  width: ${(p) => p.$w}px;
  margin-left: ${(p) => p.$ml || 0}px;
  flex: none;
  display: flex;
  align-items: center;
`;
const WhiteEntry = styled.div`
  width: 54px;
  height: 13px;
  margin-left: -3px;
  padding-left: 3px;
  display: flex;
  align-items: center;
  background: #f0f0f0;
`;
const RedSwatch = styled.div`
  width: 56px;
  height: 20px;
  background: #f00;
  border: 1px solid #3c2020;
`;
const StyleGrid = styled.div<{ $h: number }>`
  height: ${(p) => p.$h}px;
  flex: none;
  display: grid;
  grid-template-columns: repeat(8, 24px);
  padding-left: 14px;
`;
const StyleCell = styled.div<{ $on?: boolean }>`
  height: 24px;
  width: 23px;
  display: flex;
  align-items: center;
  justify-content: center;
  border-radius: 3px;
  background: ${(p) => (p.$on ? "#353535" : "transparent")};
  border: 1px solid ${(p) => (p.$on ? "#646464" : "transparent")};
`;
const AaPair = styled.div`
  display: flex;
  align-items: flex-start;
  & > :last-child { margin-top: 3px; }
`;

/* ---------- dialog ---------- */

const Dialog = styled.section`
  position: absolute;
  left: 388px;
  top: 151px;
  width: 1144px;
  height: 575px;
  padding: 0 6px 6px;
  background: linear-gradient(#99b4d1, #b9d1ea 28px);
  border: 1px solid #111;
  border-radius: 7px 7px 0 0;
  box-shadow: inset -1px -1px 0 #2ad0ee, inset 1px 1px 0 #f4f8fc;
`;
const DialogTitle = styled.div`
  height: 28px;
  display: flex;
  align-items: center;
  justify-content: space-between;
  padding: 5px 2px 0 4px;
`;
const CloseButton = styled.div`
  width: 31px;
  height: 17px;
  margin-top: -2px;
  display: flex;
  align-items: center;
  justify-content: center;
  background: linear-gradient(#e5a79b, #d47d6c 48%, #b93a22 50%, #d0614a);
  border: 1px solid #43151b;
  border-radius: 2px;
  box-shadow: inset 0 0 0 1px rgba(255, 220, 210, 0.6);
`;
const DialogBody = styled.div`
  height: 539px;
  display: flex;
  align-items: flex-start;
  background: ${c.panel};
`;
const Sections = styled.ul`
  width: 162px;
  height: 518px;
  margin: 10px 10px 0 10px;
  padding: 1px 0 0;
  list-style: none;
  flex: none;
  border: 1px solid #454545;
`;
const SectionItem = styled.li<{ $on?: boolean }>`
  height: 18px;
  margin: 0 0 2px;
  padding-left: 5px;
  display: flex;
  align-items: center;
  background: ${(p) => (p.$on ? "#6a6a6a" : "transparent")};
`;
const Settings = styled.div`
  width: 833px;
  flex: none;
  padding-top: 8px;
`;
const TopGroups = styled.div`
  display: grid;
  grid-template-columns: 443px 377px;
  column-gap: 13px;
`;
const Group = styled.fieldset<{ $h: number; $mt?: number }>`
  height: ${(p) => p.$h}px;
  margin: ${(p) => p.$mt || 0}px 0 0;
  padding: 0;
  min-width: 0;
  border: 1px solid #454545;
`;
const Legend = styled.legend<{ $ml?: number }>`
  height: 18px;
  margin-left: ${(p) => p.$ml || 13}px;
  padding: 2px 2px 0 5px;
  display: flex;
  align-items: center;
`;
const MemRow = styled.div<{ $h: number }>`
  height: ${(p) => p.$h}px;
  display: grid;
  grid-template-columns: 231px auto;
  align-items: center;
  column-gap: 10px;
  & > :first-child { justify-self: end; }
`;
const MemValue = styled.div`
  display: flex;
  align-items: center;
  gap: 10px;
  margin-left: -5px;
`;
const SliderRow = styled.div`
  display: flex;
  align-items: flex-start;
  padding: 5px 0 0 116px;
`;
const SliderBody = styled.div`
  width: 169px;
  margin: 0 8px 0 11px;
`;
const Track = styled.div`
  height: 18px;
  border: 1px solid #3a3a3a;
  background: linear-gradient(90deg, #5c9af2 70%, #fff 70%);
`;
const Knob = styled.div`
  margin: 1px 0 0 112px;
`;
const GpuBody = styled.div`
  display: flex;
  flex-direction: column;
  align-items: flex-start;
  padding: 6px 0 0 10px;
`;
const GpuCheck = styled.div`
  display: flex;
  align-items: center;
  gap: 7px;
  height: 17px;
  margin: 12px 0 9px -2px;
`;
const GpuAction = styled.div`
  margin-left: -2px;
`;
const PushButton = styled.div<{ $w: number }>`
  width: ${(p) => p.$w}px;
  height: 21px;
  display: flex;
  align-items: center;
  justify-content: center;
  background: ${c.field};
  border: 1px solid #646464;
  border-radius: 3px;
`;
const HistoryGrid = styled.div`
  display: grid;
  grid-template-columns: 558px auto;
  padding-left: 7px;
`;
const Presets = styled.div`
  display: grid;
  grid-template-rows: 16px repeat(3, 21px);
  row-gap: 8px;
  padding-top: 11px;
  & > :first-child { margin: 1px 0 0 2px; }
`;
const CacheForm = styled.div`
  margin-left: -9px;
  padding-top: 8px;
`;
const CacheRow = styled.div`
  height: 29px;
  display: grid;
  grid-template-columns: 181px auto;
  column-gap: 9px;
  align-items: center;
  & > :first-child { justify-self: end; }
`;
const CacheNote = styled.div`
  display: grid;
  grid-template-columns: 25px auto;
  align-items: start;
  column-gap: 14px;
  padding: 5px 0 0 3px;
  & > :first-child { margin-top: 13px; }
`;
const NoteLines = styled.div`
  display: grid;
  grid-auto-rows: 12px;
`;
const DialogButtons = styled.div`
  margin: 10px 0 0 15px;
  display: grid;
  row-gap: 8px;
`;
const PillButton = styled.div<{ $main?: boolean }>`
  width: 89px;
  height: 27px;
  display: flex;
  align-items: center;
  justify-content: center;
  border: ${(p) => (p.$main ? "1.500px solid #e4e4e4" : "1px solid #858585")};
  border-radius: 14px;
`;

const sections: [string, number][] = [
  ["Général", 34], ["Interface", 40], ["Espace de travail", 75], ["Outils", 24.500], ["Journal de l'historique", 97],
  ["Gestion des fichiers", 86], ["Exporter", 37.500], ["Performances", 60.500], ["Disques de travail", 79], ["Curseurs", 40.500],
  ["Transp. et coul. non imprimables", 145.500], ["Unités et règles", 68.500], ["Repères, grille et tranches", 115.500],
  ["Modules externes", 77.500], ["Texte", 24], ["3D", 12], ["Aperçus de technologie", 105],
];

/* ---------- annotation ---------- */

const RedFrame = styled.div`
  position: absolute;
  left: 582px;
  top: 175px;
  width: 444px;
  height: 160px;
  border: 7px solid #f00;
`;
const RedStem = styled.div`
  position: absolute;
  left: 920px;
  top: 335px;
  width: 10px;
  height: 234px;
  background: #f00;
`;
const RedNote = styled.div`
  position: absolute;
  left: 717px;
  top: 568px;
  display: grid;
  grid-auto-rows: 56px;
  -webkit-text-stroke: 0.6px #f00;
`;

/* ---------- taskbar ---------- */

const Taskbar = styled.footer`
  height: 40px;
  flex: none;
  display: flex;
  border-top: 1px solid #d7e3f0;
  background: linear-gradient(90deg, #8297b2 50px, #a6bfdc 66px, #a6bfdc 1680px, #8297b2 1712px);
`;
const TaskSlot = styled.div<{ $w: number; $on?: boolean; $active?: boolean; $stack?: boolean; $ml?: number }>`
  width: ${(p) => p.$w}px;
  margin-left: ${(p) => p.$ml || 0}px;
  height: 38px;
  flex: none;
  display: flex;
  align-items: center;
  justify-content: center;
  ${(p) =>
    p.$on &&
    css`
      border: 1px solid #42536a;
      border-radius: 3px;
      box-shadow: inset 0 0 0 1px rgba(255, 255, 255, 0.65)${p.$stack ? ", 3px 0 0 0 #b9cce2, 4px 0 0 0 #42536a" : ""};
      background: ${p.$active ? "linear-gradient(135deg, #e6edf5, #c3d3e5)" : "linear-gradient(135deg, #c9d7e8, #a9c0dc)"};
    `}
`;
const PsTile = styled.div`
  width: 28px;
  height: 27px;
  display: flex;
  align-items: center;
  justify-content: center;
  background: #001d26;
  border: 2px solid #00c8ff;
`;
const UTile = styled.div`
  width: 31px;
  height: 31px;
  display: flex;
  align-items: center;
  justify-content: center;
  background: linear-gradient(135deg, #2a35a8, #10177a);
  border-radius: 2px;
`;
const Tray = styled.div`
  margin-left: auto;
  display: flex;
  align-items: center;
`;
const TrayLang = styled.div`
  margin: -4px 17px 0 0;
`;
const Clock = styled.div`
  width: 58px;
  margin: 0 12px 0 17px;
  display: grid;
  grid-auto-rows: 17px;
  justify-items: center;
`;
const ShowDesktop = styled.div`
  width: 15px;
  height: 39px;
  border: 1px solid #3c4a5c;
  background: linear-gradient(135deg, #a9bacd, #60738c 55%, #8ba0b9);
`;

/* ---------- composition ---------- */

const menus: [string, number, number][] = [
  ["Fichier", 7, 35], ["Edition", 17, 36.500], ["Image", 17, 33], ["Calque", 17, 37], ["Texte", 17.500, 28.500],
  ["Sélection", 17.500, 48], ["Filtre", 18, 26.500], ["3D", 16, 16], ["Affichage", 16.500, 51], ["Fenêtre", 17, 39.500], ["Aide", 17, 24.500],
];

const Header = () => (
  <>
    <MenuBar>
      <PsLogo><T size={19} w={22} bold color="#7ba7dc">Ps</T></PsLogo>
      {menus.map(([m, g, w]) => (
        <MenuItem key={m} $gap={g}><T size={11.500} w={w}>{m}</T></MenuItem>
      ))}
      <WindowButtons>
        <WinButton><G w={10} h={10} color="#c4c4c4"><path d="M0 7.500h10v3H0z" {...solid} /></G></WinButton>
        <WinButton><G w={11} h={10} color="#c4c4c4"><path d="M4 4V1h6v5H7.500M1 4.500h6V9H1z" strokeWidth={1.800} /></G></WinButton>
        <WinButton><G w={10} h={9} color="#c4c4c4"><path d="M1 .5l8 8M9 .5l-8 8" strokeWidth={2.200} /></G></WinButton>
      </WindowButtons>
    </MenuBar>
    <OptionsBar>
      <GripV /><Gap $w={13} /><Dropper /><Gap $w={9} /><Chevron /><Gap $w={8} /><Rule /><Gap $w={11} />
      <T w={29}>Taille :</T><Gap $w={5} />
      <Field $w={122} $h={19} $round><Gap $w={3} /><T w={90}>Echantillon ponctuel</T><Push /><Chevron /></Field>
      <Gap $w={12} /><T w={55}>Echantillon :</T><Gap $w={5} />
      <Field $w={169} $h={19} $round><Gap $w={3} /><T w={74}>Tous les calques</T><Push /><Chevron /></Field>
      <Gap $w={8} /><Rule /><Gap $w={8} />
      <CheckBox $s={11}><Check /></CheckBox><Gap $w={5} /><T w={151}>Afficher anneau d'échantillonnage</T>
      <Push />
      <G w={14} color="#8e8e8e"><circle cx={7} cy={6} r={6} strokeWidth={1.600} /></G><Gap $w={9} /><Rule /><Gap $w={8} />
      <G w={16} h={14} color="#a8a8a8"><rect x={0.700} y={0.700} width={14.600} height={12.600} /><path d="M2.500 3h3v1.500h-3zM2.500 6h3v1.500h-3zM2.500 9h3v1.500h-3z" {...solid} /></G>
      <Gap $w={10} /><Chevron color="#6c6c6c" /><Gap $w={7} />
    </OptionsBar>
  </>
);

const ToolColumn = () => (
  <Toolbox>
    <StripHead><Expand /></StripHead>
    <Gap $h={3} /><GripH $w={20} /><Gap $h={10} />
    {toolIcons.map((t, i) => (
      <Tool key={i} $on={t.on} $flag={t.flag}>{t.icon}</Tool>
    ))}
    <Gap $h={5} />
    <G w={28} h={10}><path d="M3.500 4h7v5h-7z" {...solid} /><rect x={0.500} y={0.500} width={6} height={5} fill="#111" /><path d="M20 2.500h6v6M22 0 19.500 2.500l2.500 2.500M23.500 6.500l2.500 2.500L28.500 6.500" /></G>
    <Gap $h={5} />
    <Swatches $w={30} $h={30}><Swatch $color="#f00" /><Swatch $color="#fff" $back /></Swatches>
    <Gap $h={3} />
    <Tool $flag={false}><G w={17} h={11}><rect x={0.600} y={0.600} width={15.800} height={9.800} /><ellipse cx={8.500} cy={5.500} rx={4} ry={3.500} strokeDasharray="1 1.200" /></G></Tool>
    <Tool><G w={17} h={12}><path d="M5 4.500H.6v7h10V9" /><rect x={5.500} y={0.600} width={11} height={7.500} /></G></Tool>
  </Toolbox>
);

const LayerLine = ({ l }: { l: (typeof layers)[number] }) => (
  <LayerRow $h={l.h} $on={l.on}>
    <EyeCell><Eye /></EyeCell>
    {(l.kind === "group" || l.kind === "open") && (
      <>
        <Gap $w={18} />
        {l.kind === "group" ? <G w={8} h={10} color="#a5a5a5"><path d="M2.500.5 6 5 2.500 9.500" /></G> : <Chevron color="#a5a5a5" />}
        <Gap $w={5} />
        {l.kind === "group" ? <Folder /> : <OpenFolder />}
        <Gap $w={13} />
      </>
    )}
    {l.kind === "text" && (<><Gap $w={46} /><Serif $size={15} $b>T</Serif><Gap $w={21} /></>)}
    {l.kind === "shape" && (
      <>
        <Gap $w={35} />
        <LayerIcon><Thumb $on={l.on}><Checker /><ShapeIcon w={13} /></Thumb></LayerIcon>
        <Gap $w={10} />
      </>
    )}
    <LayerName><T w={l.w}>{l.name}</T></LayerName>
  </LayerRow>
);

const PanelColumn = () => (
  <Panels>
    <StripHead $end />
    <TabStrip>
      <Tab $w={56} $on $pad={9}><T w={36} bold>Couleur</T></Tab>
      <Tab $w={61} $pad={8}><T w={42} bold color={c.dim}>Nuancier</T></Tab>
    </TabStrip>
    <ColorBody>
      <SwatchSlot><Swatches $w={31} $h={31}><Swatch $color="#f00" /><Swatch $color="#fff" $back /></Swatches></SwatchSlot>
      <ColorField><G w={6} h={6} color="#222"><path d="M.8 0A5.500 5.500 0 0 0 6 5.500" strokeWidth={1} /></G></ColorField>
      <HueRow><G w={9} h={8}><path d="M.5.5h4l4 3.500-4 3.500h-4z" fill="#ddd" stroke="#333" /></G><Hue /></HueRow>
    </ColorBody>
    <Divider $h={2} />
    <TabStrip><TabMenu><Burger /></TabMenu></TabStrip>
    <PropsHead><T w={78} bold>rme dynamique</T></PropsHead>
    <PropsBody>
      <PropsForm>
        <Gap $h={13} />
        <PropRow $h={26}><Field $w={56} $h={17}><T w={24} color={c.off}>30 px</T></Field></PropRow>
        <PropRow $h={21} $pr={74} $line><Field $w={56} $h={17}><T w={33} color={c.off}>3940 px</T></Field></PropRow>
        <Gap $h={5} />
        <PropRow $h={24}><Field $w={52} $h={20} $round><G w={31} h={2}><path d="M0 1h31" stroke="#fff" strokeWidth={2} /></G><Chevron /></Field></PropRow>
        <PropRow $h={24} $line>
          <Field $w={51} $h={19} $round $ghost><Gap $w={5} /><G w={12}><path d="M0 0h12v6H6v6H0z" {...solid} /><path d="M5.500 12V5.500H12" stroke="#111" strokeWidth={1.500} /></G><Push /><Chevron color="#6c6c6c" /></Field>
        </PropRow>
        <Gap $h={5} />
        <PropRow $h={22}><Field $w={120} $h={17} /></PropRow>
        <PropRow $h={55} $pr={77}><Field $w={100} $h={17} /><G w={15} h={17}><path d="M.7 2.200h8.600q4 .5 4.300 4.300v9H.7z" /></G></PropRow>
        <PropRow $h={24} $pr={77} $line><Field $w={100} $h={17} /><G w={15} h={17}><path d="M.7 2.200h12.900v9q-.5 4-4.300 4.300H.7z" /></G></PropRow>
        <Gap $h={5} />
        <PropRow $h={30} $pr={101}>
          <Field $w={60} $h={25}><Push /><G w={15}><path d="M0 0h10v4.500h4.500V15H4.500V10H0z" {...solid} /><path d="M5 5h4v4H5z" fill="#444" stroke="none" /></G><Gap $w={5} /></Field>
        </PropRow>
      </PropsForm>
      <Gutter $h={278} />
    </PropsBody>
    <Divider $h={2} />
    <TabStrip>
      <Tab $w={160} $pad={141}><T w={9} bold color={c.dim}>és</T></Tab>
      <TabMenu><Burger /></TabMenu>
    </TabStrip>
    <Divider />
    <FilterRow>
      <Push />
      <G w={11}><rect x={0.600} y={0.600} width={9.800} height={9.800} /></G><Gap $w={14} />
      <HalfDisc /><Gap $w={13} /><Serif $size={16} $b>T</Serif><Gap $w={12} /><ShapeIcon /><Gap $w={13} />
      <G w={10} h={12}><path d="M3 4V.6h3.500L9.400 3.500v7.900H6M6.500.6v3h3" /><path d="M0 5h6v7H0z" {...solid} /></G><Gap $w={23} /><Toggle />
    </FilterRow>
    <LayerOpt $h={27}>
      <Field $w={60} $round $ghost><Push /><Chevron color="#6c6c6c" /></Field><Gap $w={0} />
      <T w={39}>Opacité :</T>
      <Field $w={56} $h={19} $round><T w={28} color={c.off}>100 %</T><Split><Chevron /></Split></Field>
    </LayerOpt>
    <LayerOpt $h={28}>
      <G w={10} h={13}><path d="M0 5.500h10V13H0z" {...solid} /><path d="M2.200 6V3.500a2.800 2.800 0 0 1 5.600 0V6" strokeWidth={1.500} /><path d="M4.300 8.500h1.400v2H4.300z" fill="#444" stroke="none" /></G>
      <Gap $w={27} /><T w={28}>Fond :</T>
      <Field $w={56} $h={19} $round><T w={28} color={c.off}>100 %</T><Split><Chevron /></Split></Field>
    </LayerOpt>
    <LayerArea>
      <LayerList>
        <LayerRow $h={15}><Gap $w={142} /><LayerName $drop={0}><T w={30}>air wall</T></LayerName></LayerRow>
        <LayerRow $h={23}><Gap $w={142} /><LayerName><T w={32}>roupes</T></LayerName></LayerRow>
        {layers.map((l) => (<LayerLine key={l.name} l={l} />))}
      </LayerList>
      <Scroller><ChevronUp /><ScrollThumb /><Chevron color="#a5a5a5" /></Scroller>
    </LayerArea>
    <BottomBar>
      <Gap $w={82} />
      <G w={14} h={8} color="#8c8c8c"><path d="M6 1.500H3.500a2.500 2.500 0 0 0 0 5H6M8 1.500h2.500a2.500 2.500 0 0 1 0 5H8M4.500 4h5" strokeWidth={1.500} /></G>
      <Gap $w={14} /><Serif $size={17} $i>fx</Serif><Gap $w={14} />
      <G w={13} h={11}><path d="M0 0h13v11H0z" {...solid} /><circle cx={6.500} cy={5.500} r={3} fill="#535353" stroke="none" /></G>
      <Gap $w={16} /><HalfDisc /><Gap $w={14} /><Folder w={12} /><Gap $w={16} />
      <G w={11}><path d="M.6 3V.6h9.800v9.800H6.500" /><path d="M.6 5.500H6v5z" {...solid} /></G><Gap $w={15} /><Trash />
    </BottomBar>
  </Panels>
);

const LibraryColumn = () => (
  <Library>
    <StripHead $end><Expand /></StripHead>
    <TabStrip><TabMenu><Burger /></TabMenu></TabStrip>
    <LibTools>
      <LibLine>
        <Field $w={150} $h={19} $round $ghost />
        <GridButton><G w={11} color="#eee"><path d="M0 0h5v5H0zM6.500 0h5v5h-5zM0 6.500h5v5H0zM6.500 6.500h5v5h-5z" {...solid} /></G></GridButton>
        <G w={12} h={12}><path d="M0 1h12M0 4.300h12M0 7.600h12M0 10.900h12" strokeWidth={2} /></G><Gap $w={7} />
      </LibLine>
      <LibLine><Chevron /><Gap $w={4} /></LibLine>
    </LibTools>
    <LibBody>
      <LibTitle><T size={14} color="#bbb">C</T></LibTitle>
      {([
        ["Faites glisser et déposez une image", 172],
        ["pour l'ajouter à votre document, ou", 172],
        ["utilisez les boutons ci-dessous pour", 173],
        ["ajouter des couleurs, des styles de", 165],
        ["calque et plus encore.", 106],
      ] as [string, number][]).map(([s, w]) => (
        <T key={s} w={w} size={12} color={c.dim}>{s}</T>
      ))}
      <Help><T size={12} bold color="#999">?</T></Help>
      <T w={220} size={12} color="#999" underline>Nouvelle bibliothèque à partir du document...</T>
    </LibBody>
    <BottomBar>
      <Gap $w={11} />
      <G w={13} h={12}><path d="M5.500 0v11M0 5.500h11" strokeWidth={2.600} /></G><Gap $w={12} />
      <G w={12} h={12}><path d="M6 0l5 5H8v3H4V5H1zM0 9h12v1H0zM0 11h12v1H0z" {...solid} /></G>
      <Push />
      <G w={17} h={12}><rect x={0.800} y={1} width={15} height={10} rx={5} strokeWidth={1.600} /><path d="M11.500 8.500a3 3 0 1 1 0-5M4 6.500a2.500 2.500 0 0 1 4-2l4.500 4" strokeWidth={1.400} /></G>
      <Gap $w={10} /><Trash color="#7c7c7c" /><Gap $w={22} />
    </BottomBar>
  </Library>
);

const HistoryPanel = () => (
  <Floating $x={1642} $y={28} $w={207} $h={160}>
    <FloatHead><Collapse /><Cross /></FloatHead>
    <TabStrip><Tab $w={68} $on $pad={8}><T w={50} bold>Historique</T></Tab><TabMenu><Burger /></TabMenu></TabStrip>
    <HistoryList>
      <HistoryRow $h={30}><HistoryBrush /><Gap $w={4} /><SnapThumb /><Gap $w={5} /><T w={112}>nouveau_schema_relati...</T></HistoryRow>
      <Gap $h={1} />
      <HistoryRow $h={23} $on>
        <MiniBox /><Gap $w={14} />
        <G w={15} h={15}><path d="M0 0h7v2.500h7.500V15H0z" {...solid} /><path d="M2.500 5h9.500M2.500 7.500h9.500M2.500 10h9.500M2.500 12.500h9.500" stroke="#555" strokeWidth={1} /></G>
        <Gap $w={12} /><T w={28}>Ouvrir</T>
      </HistoryRow>
    </HistoryList>
    <FloatTools>
      <G w={14} h={12}><path d="M5 5V0h5v3h4v8H8V8H5z" {...solid} /><path d="M0 7.500h7M3.500 4v7" strokeWidth={2} /></G><Gap $w={19} />
      <G w={13} h={11}><path d="M0 2.500h3.500L5 0h3.500L10 2.500h3V11H0z" {...solid} /><circle cx={6.500} cy={6.300} r={2.500} stroke="#535353" /></G><Gap $w={16} /><Trash />
    </FloatTools>
    <FloatGrip><GripH /></FloatGrip>
  </Floating>
);

const Combo = ({ w, h = 19, text, tw, ghost }: { w: number; h?: number; text: string; tw: number; ghost?: boolean }) => (
  <Field $w={w} $h={h} $round $ghost={ghost}><T w={tw} color={c.off}>{text}</T><Split><Chevron /></Split></Field>
);

const CharacterPanel = () => (
  <Floating $x={1699} $y={317} $w={221} $h={265}>
    <FloatHead><Collapse /><Cross /></FloatHead>
    <TabStrip>
      <Tab $w={63} $on><T w={44} bold>Caractère</T></Tab>
      <Tab $w={71} $pad={8}><T w={53} bold color={c.dim}>Paragraphe</T></Tab>
      <TabMenu><Burger /></TabMenu>
    </TabStrip>
    <Gap $h={9} />
    <CharRow $h={20} $pl={7}>
      <Combo w={122} text="Calibri" tw={28} /><Gap $w={9} />
      <Field $w={75} $h={19} $round $ghost><WhiteEntry><T w={20} color="#666">Bold</T></WhiteEntry><Split><Chevron color="#6c6c6c" /></Split></Field>
    </CharRow>
    <Gap $h={8} />
    <CharRow $h={20}>
      <IconSlot $w={20}><Serif $size={12} $b>T</Serif><Serif $size={19} $b>T</Serif></IconSlot>
      <Combo w={78} text="48 pt" tw={22} />
      <IconSlot $w={20} $ml={17}>
        <G w={17} h={18}><path d="M3 6v9M.8 8 3 5.500 5.200 8M.8 13 3 15.500 5.200 13" /><path d="M8.500 7l2.500-6 2.500 6M9 5h4M8.500 16l2.500-6 2.500 6M9 14h4M6.500 8.500H16M6.500 17.500H16" strokeWidth={1} /></G>
      </IconSlot>
      <Combo w={73} text="(Auto)" tw={30} />
    </CharRow>
    <Gap $h={2} />
    <CharRow $h={20}>
      <IconSlot $w={20}><G w={18} h={18}><path d="M.5 1.500l3 8 3-8M7 12l4-12M9 9.500l4-8 4 8M10.500 7h5M10 15.500h8M12.500 13 10 15.500l2.500 2.500" /></G></IconSlot>
      <Combo w={78} text="Métrique" tw={39} />
      <IconSlot $w={20} $ml={17}><G w={18} h={18}><path d="M0 0h18v12H0z" {...solid} /><path d="M2 2l3 7.500L8 2M9 10l3-8 3.500 8M10 7.500h4.500" stroke="#333" strokeWidth={1.500} /><path d="M1 15.500h16M3 13.500l-2.500 2L3 17.500M15 13.500l2.500 2-2.500 2" /></G></IconSlot>
      <Combo w={73} text="0" tw={5} />
    </CharRow>
    <Gap $h={6} />
    <CharRow $h={20}>
      <IconSlot $w={21}><G w={5} h={14}><path d="M2.500 1v12M.3 3.500 2.500.8l2.200 2.700M.3 10.500l2.200 2.700 2.200-2.700" /></G><Serif $size={19} $b>T</Serif></IconSlot>
      <Field $w={56} $h={17}><T w={28} color={c.off}>100 %</T></Field>
      <IconSlot $w={21} $ml={49}><G w={18} h={17}><path d="M4 1h10v3M4 4V1M9 1v10M6.500 11h5" strokeWidth={2} /><path d="M1 14.500h16M3 12.500l-2.500 2 2.500 2M15 12.500l2.500 2-2.500 2" /></G></IconSlot>
      <Field $w={56} $h={17}><T w={28} color={c.off}>100 %</T></Field>
    </CharRow>
    <Gap $h={2} />
    <CharRow $h={20}>
      <IconSlot $w={21}><Serif $size={15} $u>A</Serif><G w={6} h={16}><path d="M3 8v8M.8 10.500 3 8l2.200 2.500" /><path d="M.5 6h5M1 1.500h3.500V5H1.500V3h3" strokeWidth={1} /></G></IconSlot>
      <Field $w={56} $h={17}><T w={17} color={c.off}>0 pt</T></Field>
      <Gap $w={21} /><T w={41}>Couleur :</T><Gap $w={8} /><RedSwatch />
    </CharRow>
    <Gap $h={9} />
    <StyleGrid $h={31}>
      <StyleCell><Serif $size={16} $b>T</Serif></StyleCell>
      <StyleCell><Serif $size={16} $b $i>T</Serif></StyleCell>
      <StyleCell><Serif $size={14} $b>TT</Serif></StyleCell>
      <StyleCell><Serif $size={15} $b>T<small>T</small></Serif></StyleCell>
      <StyleCell><Serif $size={15} $b>T<sup>1</sup></Serif></StyleCell>
      <StyleCell><Serif $size={15} $b>T<sub>1</sub></Serif></StyleCell>
      <StyleCell><Serif $size={15} $b $u>T</Serif></StyleCell>
      <StyleCell><Serif $size={15} $b $s>T</Serif></StyleCell>
    </StyleGrid>
    <StyleGrid $h={32}>
      <StyleCell $on><Serif $size={18}>fi</Serif></StyleCell>
      <StyleCell $on><G w={14} h={14}><ellipse cx={4.500} cy={9} rx={3.300} ry={4} transform="rotate(20 4.500 9)" strokeWidth={1.500} /><path d="M5 5q4 3 8-3" strokeWidth={1.300} /></G></StyleCell>
      <StyleCell><Serif $size={18}>st</Serif></StyleCell>
      <StyleCell><Serif $size={18} $i $dim>A</Serif></StyleCell>
      <StyleCell><Serif $size={17} $fn="overline">ad</Serif></StyleCell>
      <StyleCell><Serif $size={17} $i $dim>T</Serif></StyleCell>
      <StyleCell><Serif $size={17}>1<sup>st</sup></Serif></StyleCell>
      <StyleCell><Serif $size={17}>½</Serif></StyleCell>
    </StyleGrid>
    <CharRow $h={20} $pl={8}>
      <Field $w={111} $h={19} $round $ghost><Gap $w={4} /><T w={37} color={c.dim}>Français</T><Push /><Chevron color="#6c6c6c" /></Field>
      <Gap $w={6} /><AaPair><T size={11}>a</T><T size={12}>a</T></AaPair><Push />
      <Field $w={67} $h={19} $round $ghost><Gap $w={4} /><T w={23} color={c.dim}>Nette</T><Push /><Chevron color="#6c6c6c" /></Field><Gap $w={9} />
    </CharRow>
  </Floating>
);

const D = (p: TProps) => <T size={12.500} {...p} />;
const soft = "#cfcfcf";

const Preferences = () => (
  <Dialog>
    <DialogTitle>
      <T w={61} size={12} color="#000">Préférences</T>
      <CloseButton><G w={11} h={9}><path d="M2 1l7 7M9 1L2 8" stroke="#555" strokeWidth={4} /><path d="M2 1l7 7M9 1L2 8" stroke="#fff" strokeWidth={2.400} /></G></CloseButton>
    </DialogTitle>
    <DialogBody>
      <Sections>
        {sections.map(([s, w]) => (<SectionItem key={s} $on={s === "Performances"}><T w={w}>{s}</T></SectionItem>))}
      </Sections>
      <Settings>
        <TopGroups>
          <Group $h={139}>
            <Legend><D w={140}>Utilisation de la mémoire</D></Legend>
            <Gap $h={2} />
            <MemRow $h={23}><D w={92} color={soft}>RAM disponible :</D><D w={48} color={soft}>7005 Mo</D></MemRow>
            <MemRow $h={23}><D w={76} color={soft}>Plage idéale :</D><D w={80} color={soft}>3852-5043 Mo</D></MemRow>
            <MemRow $h={27}>
              <D w={150} color={soft}>Laisser Photoshop utiliser :</D>
              <MemValue><Field $w={54} $h={19}><D w={28}>4903</D></Field><D w={60} color={soft}>Mo (70 %)</D></MemValue>
            </MemRow>
            <SliderRow>
              <G w={9} h={18}><path d="M0 9h9" strokeWidth={2} /></G>
              <SliderBody><Track /><Knob><G w={12} h={12}><path d="M6 .8l5 6.200v4.300H1V7z" fill="#eee" stroke="#333" strokeWidth={1} /></G></Knob></SliderBody>
              <G w={11} h={18}><path d="M0 8.500h11M5.500 3v11" strokeWidth={2} /></G>
            </SliderRow>
          </Group>
          <Group $h={139}>
            <Legend $ml={14}><D w={206}>Paramètres du processeur graphique</D></Legend>
            <GpuBody>
              <D w={174} color={soft}>Processeur graphique détecté :</D>
              <Gap $h={8} />
              <NoteLines><T w={87.500} color={soft}>NVIDIA Corporation</T><T w={116.500} color={soft}>Quadro M2000/PCIe/SSE2</T></NoteLines>
              <GpuCheck><CheckBox $s={13}><Check /></CheckBox><D w={180}>Utiliser un processeur graphique</D></GpuCheck>
              <GpuAction><PushButton $w={147}><D w={125}>Paramètres avancés...</D></PushButton></GpuAction>
            </GpuBody>
          </Group>
        </TopGroups>
        <Group $h={179} $mt={7}>
          <Legend $ml={14}><D w={108}>Historique et cache</D></Legend>
          <HistoryGrid>
            <Presets>
              <D w={353} color={soft}>Optimiser les niveaux de cache et la taille de la mosaïque pour :</D>
              <PushButton $w={355}><D w={207}>Conception web / interface utilisateur</D></PushButton>
              <PushButton $w={355}><D w={109}>Par défaut / Photos</D></PushButton>
              <PushButton $w={355}><D w={177}>Dimensions de pixels immenses</D></PushButton>
            </Presets>
            <CacheForm>
              <CacheRow><D w={105} color={soft}>Etats d'historique :</D><Field $w={58} $h={21} $round><D w={14}>50</D><Split><Chevron /></Split></Field></CacheRow>
              <CacheRow><D w={106} color={soft}>Niveaux de cache :</D><Field $w={58} $h={21} $round><D w={7}>4</D><Split><Chevron /></Split></Field></CacheRow>
              <CacheRow><D w={179} color={soft}>Taille de la mosaïque du cache :</D><Field $w={75} $h={21} $round><Gap $w={5} /><D w={44}>1 024 K</D><Push /><Chevron /></Field></CacheRow>
              <CacheNote>
                <G w={25}><circle cx={12.500} cy={12.500} r={11.500} strokeWidth={2} /><path d="M12.500 10.500v9" strokeWidth={3} /><path d="M11 6h3v3h-3z" {...solid} /></G>
                <NoteLines>
                  <T w={164} color={soft}>Définir les niveaux de cache sur 2 au</T>
                  <T w={170} color={soft}>minimum pour des performances GPU</T>
                  <T w={41} color={soft}>optimales</T>
                </NoteLines>
              </CacheNote>
            </CacheForm>
          </HistoryGrid>
        </Group>
        <Group $h={176} $mt={7}><Legend $ml={15}><D w={62}>Description</D></Legend></Group>
      </Settings>
      <DialogButtons>
        <PillButton $main><D w={16}>OK</D></PillButton>
        <PillButton><D w={43}>Annuler</D></PillButton>
        <PillButton><D w={56}>Précédent</D></PillButton>
        <PillButton><D w={41}>Suivant</D></PillButton>
      </DialogButtons>
    </DialogBody>
  </Dialog>
);

const TaskBar = () => (
  <Taskbar>
    <TaskSlot $w={40} $ml={7}>
      <G w={36}>
        <defs><radialGradient id="orb" cx=".5" cy=".8" r=".8"><stop stopColor="#5fd8f5" /><stop offset=".5" stopColor="#1e6ca5" /><stop offset="1" stopColor="#37536f" /></radialGradient></defs>
        <circle cx={18} cy={18} r={17.500} fill="url(#orb)" stroke="#2b4661" />
        <path d="M9 11q4-3 8-1l-1.500 7q-4-2-8 0z" fill="#e8602c" stroke="none" /><path d="M18.500 10.500q4 3 9 .5l-2 7q-4 2-8.500-.5z" fill="#8cc63f" stroke="none" />
        <path d="M7 19q4-2 8 0l-1.500 7q-4-2-8 0z" fill="#3f9ee0" stroke="none" /><path d="M16.500 19.500q4 2.500 8.500.5l-2 7q-4 2-8-.5z" fill="#fbc52d" stroke="none" />
      </G>
    </TaskSlot>
    <TaskSlot $w={59} $ml={12} $on>
      <G w={32} h={30}><path d="M1 4h9l2 2h18v19H1z" fill="#e9c763" stroke="#b99838" /><path d="M3 8h27v17H3z" fill="#f8e6a0" stroke="#cfae52" /><path d="M5 3h3M14 5h3M23 5h3" stroke="#3b8fd0" strokeWidth={2} /><path d="M5 30v-8q0-4 4-4h14q4 0 4 4v8h-4v-7H9v7z" fill="#9fd8f2" stroke="#5ba3c7" /></G>
    </TaskSlot>
    <TaskSlot $w={59} $ml={3} $on>
      <G w={30}>
        <circle cx={15} cy={15} r={15} fill="#fbd13c" stroke="none" />
        <path d="M2 7.500 8.600 19l6.400 3.500-3.500 7A15 15 0 0 1 2 7.500z" fill="#4fae50" stroke="none" />
        <path d="M2 7.500A15 15 0 0 1 28 7.500H15a7.500 7.500 0 0 0-7 4.500L4 9z" fill="#d9453a" stroke="none" />
        <circle cx={15} cy={15} r={6.800} fill="#fff" stroke="none" /><circle cx={15} cy={15} r={5.300} fill="#4688f1" stroke="none" />
      </G>
    </TaskSlot>
    <TaskSlot $w={59} $ml={3}>
      <G w={30}>
        <circle cx={15} cy={13} r={12} fill="#2a5cab" stroke="none" />
        <path d="M7 5q8-6 14-1-5 0-6 3 4 1 3 3l-5 1z" fill="#4b9be0" stroke="none" />
        <path d="M3 4q0 3 1 4 4-2 8 0-3 2-1 5h4q-1 3-4 4 3 4 8 1 5-3 2-9 4 2 4 5 1-5-3-10 8 5 7 14-3 11-14 11.500Q1 28 .5 17 .3 9 3 4z" fill="#e8731e" stroke="none" /><path d="M23 4q8 6 5 15-3 8-11 10 10-8 6-25z" fill="#f8c83a" stroke="none" />
      </G>
    </TaskSlot>
    <TaskSlot $w={59} $ml={3}>
      <G w={30} h={32}><path d="M1 2h17l5 5v24H1z" fill="#f7f7f7" stroke="#777" /><path d="M2 14h20v16H2z" fill="#9ad84c" stroke="none" /><path d="M2 23h20v7H2z" fill="#2f9a1c" stroke="none" /><path d="M6.500 19v-9q4-1.500 4 2v7M12 14h4M14 12v4M17.500 14h4M19.500 12v4" stroke="#222" /><path d="M26 1l3 1.500L19 25l-3 2 .5-4z" fill="#eeb02f" stroke="#8a5a12" strokeWidth={0.800} /></G>
    </TaskSlot>
    <TaskSlot $w={59} $ml={3} $on>
      <G w={30}><path d="M0 24h30v5H0z" fill="#eee" stroke="#999" strokeWidth={0.500} /><rect x={2} y={1} width={26} height={23} rx={3} fill="#4a4a4a" stroke="#2c2c2c" /><path d="M19.500 6.500q-8-2.500-8.500 1-.3 2.500 4.200 3.700t4.200 4q-.8 3.400-9 1.200" stroke="#f79a2c" strokeWidth={2.800} /></G>
    </TaskSlot>
    <TaskSlot $w={56} $ml={3} $on $stack>
      <G w={32}><g stroke="none"><path d="M16 0l7 7-7 7-7-7z" fill="#ee6f6f" /><path d="M25 9l7 7-7 7-7-7z" fill="#84cb55" /><path d="M16 18l7 7-7 7-7-7z" fill="#fadf71" /><path d="M7 9l7 7-7 7-7-7z" fill="#74a5f2" /></g><path d="M14 8l4 4v11M18 12l5 4" stroke="#c9d7e8" strokeWidth={2} /></G>
    </TaskSlot>
    <TaskSlot $w={59} $ml={6}>
      <UTile><G w={24} h={26}><path d="M7.500 0q-4 10-1 14.500 5 4.500 9.500-1.500L18.500 0" stroke="#fff" strokeWidth={5} /><path d="M3 22q9-3 18 0" stroke="#8e95dd" strokeWidth={2} /></G></UTile>
    </TaskSlot>
    <TaskSlot $w={59} $ml={3}>
      <G w={30}><circle cx={15} cy={15} r={14} fill="#16386a" stroke="#f2f6fa" strokeWidth={1.500} /><path d="M15 27V6M15 22l-6-4v-6M15 22l6-4v-6M15 16l-4-4V7M15 16l4-4V7M9 16l-4-2M21 16l4-2" stroke="#fff" strokeWidth={1.500} /></G>
    </TaskSlot>
    <TaskSlot $w={59} $ml={3} $on $active><PsTile><T size={13} w={16} bold color="#00c8ff">Ps</T></PsTile></TaskSlot>
    <TaskSlot $w={59} $ml={3} $on>
      <G w={32}><circle cx={16} cy={16} r={16} fill="#1ed760" stroke="none" /><path d="M6 10.500q11-3 21 2.500M7 16q9-2.500 17.500 2M8 21q8-2 14 2" stroke="#111" strokeWidth={2.600} strokeLinecap="round" /></G>
    </TaskSlot>
    <Tray>
      <TrayLang><T size={12} w={14} color="#fff">FR</T></TrayLang>
      <G w={8} h={5}><path d="M0 5l4-5 4 5z" fill="#fff" stroke="none" /></G><Gap $w={12} />
      <G w={15} h={16}><path d="M1 0v16" stroke="#fff" strokeWidth={2} /><path d="M3 1h5l1 2h6l-2 3 2 3H9L8 8H3z" fill="#fff" stroke="#39485a" strokeWidth={0.700} /></G><Gap $w={10} />
      <G w={16} h={15}><rect x={5} y={3} width={10} height={8} fill="#6a7f99" stroke="#fff" strokeWidth={1.500} /><path d="M1 1v4h4V1M3 5v8h3M6 14h8" stroke="#fff" strokeWidth={1.500} /></G>
      <Clock><T size={12} w={27} color="#fff">11:14</T><T size={12} w={58} color="#fff">14/02/2017</T></Clock>
      <ShowDesktop />
    </Tray>
  </Taskbar>
);

export default function App() {
  return (
    <Screen>
      <GlobalStyle />
      <Header />
      <Work>
        <ToolColumn />
        <DocColumn>
          <DocTabs><DocTab><T w={400} bold>nouveau_schema_relations_BDD.psd @ 12,5% (Rectangle 105 copie 2, RVB/8)</T><Cross /></DocTab></DocTabs>
          <CanvasRow><Schema /></CanvasRow>
          <StatusBar>
            <Zoom><T w={31} color="#fff">12,5 %</T></Zoom>
            <DocInfo><T w={109}>Doc : 143,1 Mo/484,4 Mo</T><G w={6} h={9} color="#bbb"><path d="M1 .5 4.500 4.500 1 8.500" /></G></DocInfo>
          </StatusBar>
        </DocColumn>
        <IconDock>
          <StripHead $end><Collapse /></StripHead>
          <DockCell><GripH /><G w={20} h={22}><path d="M1 1h6q2 .5 3 4v8l9 8v-9q-1-3-4-3h-3M1 1v12h5L3 2M12 10v9l7 2M5 4l8 15M12 12h5v6" /></G></DockCell>
        </IconDock>
        <PanelColumn />
        <LibraryColumn />
      </Work>
      <TaskBar />
      <HistoryPanel />
      <CharacterPanel />
      <Preferences />
      <RedFrame />
      <RedStem />
      <RedNote>
        <T w={552} size={43} bold font={SCHEMA} color="#f00">paramétrage de la mémoire</T>
        <T w={600} size={43} bold font={SCHEMA} color="#f00">RAM max dédiée à Photoshop</T>
      </RedNote>
    </Screen>
  );
}
